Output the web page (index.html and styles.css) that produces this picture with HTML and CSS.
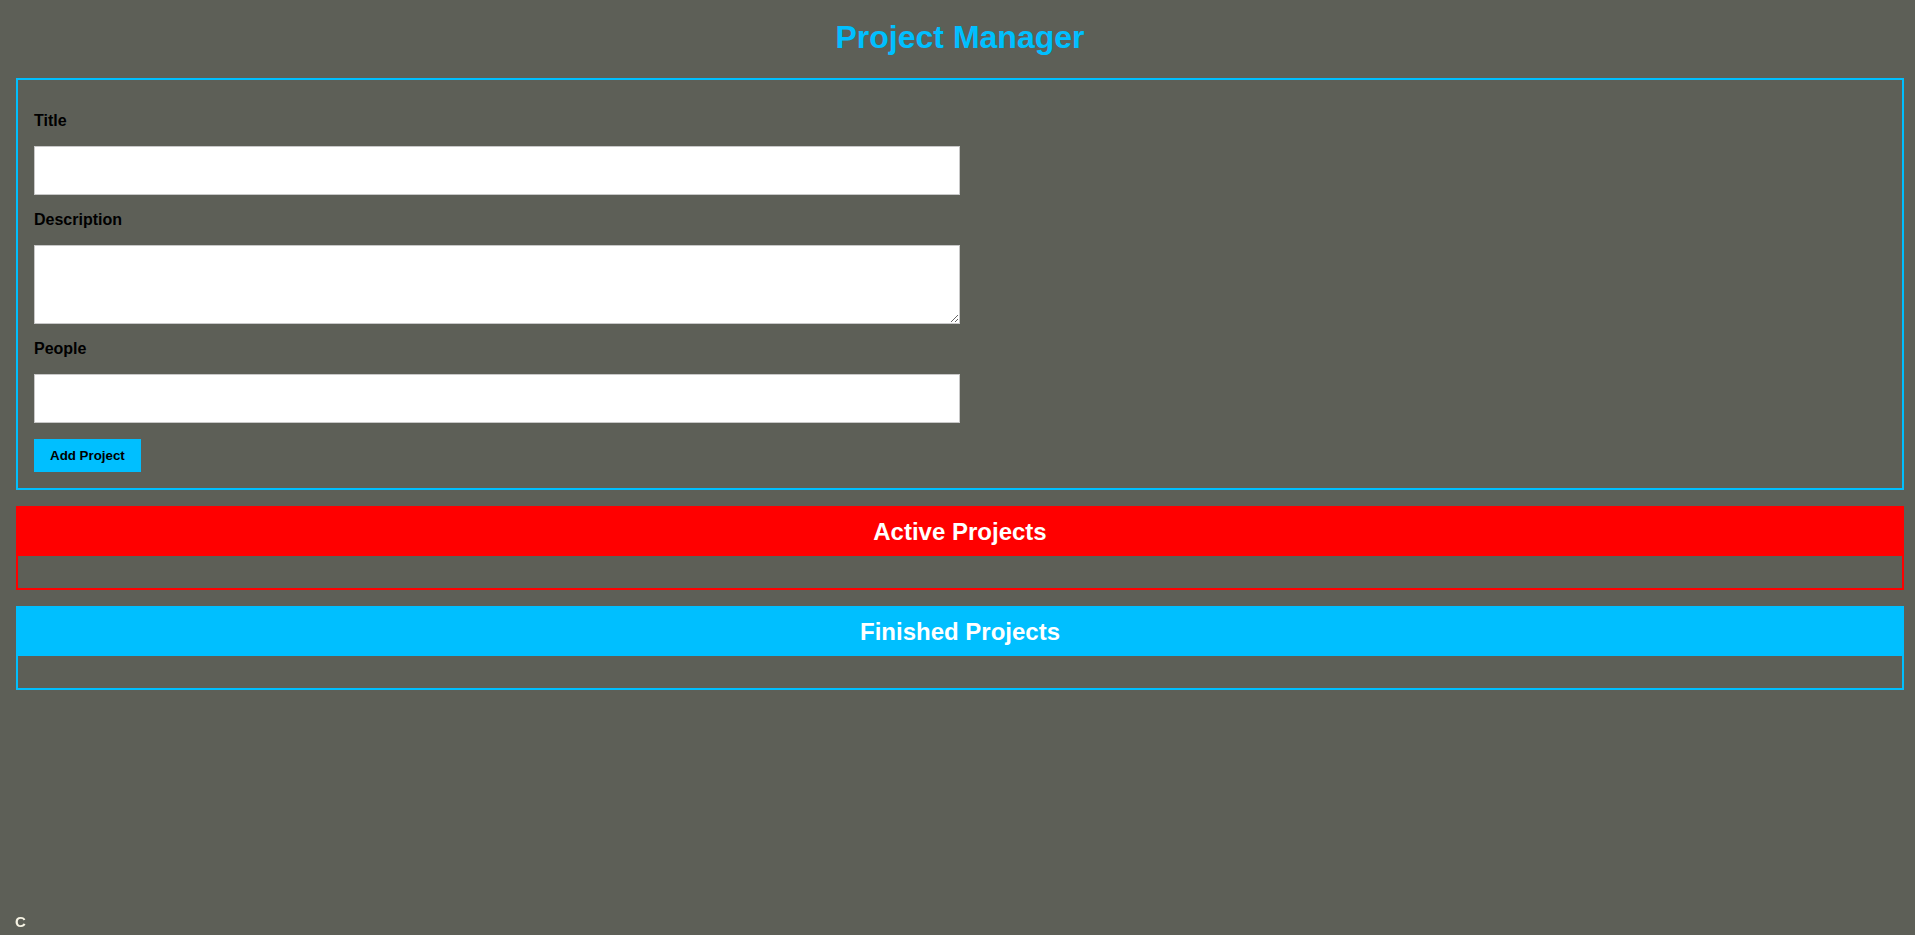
FILE: index.html
```html
<!DOCTYPE html>
<html lang="en">
<head>
<meta charset="UTF-8">
<title>Project Manager</title>
<link rel="stylesheet" href="styles.css">
</head>
<body>
<main class="app">
  <h1 class="app-title">Project Manager</h1>
  <form class="project-form">
    <label class="field-label" for="title">Title</label>
    <input class="field-input" id="title" type="text">
    <label class="field-label" for="description">Description</label>
    <textarea class="field-textarea" id="description"></textarea>
    <label class="field-label" for="people">People</label>
    <input class="field-input" id="people" type="number">
    <button class="add-btn" type="submit">Add Project</button>
  </form>
  <section class="projects projects-active">
    <header class="projects-header"><h2 class="projects-title">Active Projects</h2></header>
    <ul class="projects-list"></ul>
  </section>
  <section class="projects projects-finished">
    <header class="projects-header"><h2 class="projects-title">Finished Projects</h2></header>
    <ul class="projects-list"></ul>
  </section>
</main>
<div class="corner-mark">C</div>
</body>
</html>
```
FILE: styles.css
```css
* {
  box-sizing: border-box;
}

html, body {
  margin: 0;
  padding: 0;
  background: #5d5f57;
  font-family: "Liberation Sans", Arial, sans-serif;
  height: 100%;
}

.app {
  margin: 0 11px 0 16px;
  display: flex;
  flex-direction: column;
}

.app-title {
  margin: 19px 0 22px;
  font-size: 32px;
  line-height: 37px;
  font-weight: bold;
  color: #00bfff;
  text-align: center;
}

.project-form {
  border: 2px solid #00bfff;
  padding: 16px;
  display: flex;
  flex-direction: column;
  align-items: flex-start;
}

.field-label {
  display: block;
  margin: 16px 0;
  font-size: 16px;
  line-height: normal;
  font-weight: bold;
  color: #000;
}

.field-input,
.field-textarea {
  display: block;
  width: 50%;
  margin: 0;
  background: #fff;
  border: 1px solid #c8c8c8;
  font-family: "Liberation Sans", Arial, sans-serif;
  font-size: 16px;
}

.field-input {
  height: 49px;
}

.field-textarea {
  height: 79px;
  resize: vertical;
}

.add-btn {
  margin-top: 16px;
  height: 33px;
  padding: 0 16px;
  border: none;
  background: #00bfff;
  color: #000;
  font-family: "Liberation Sans", Arial, sans-serif;
  font-size: 13.33px;
  font-weight: bold;
  cursor: pointer;
}

.projects {
  margin-top: 16px;
  border: 2px solid;
}

.projects-active {
  border-color: #ff0000;
}

.projects-finished {
  border-color: #00bfff;
}

.projects-header {
  height: 48px;
}

.projects-active .projects-header {
  background: #ff0000;
}

.projects-finished .projects-header {
  background: #00bfff;
}

.projects-title {
  margin: 0;
  font-size: 24px;
  line-height: 48px;
  font-weight: bold;
  color: #fff;
  text-align: center;
}

.projects-list {
  margin: 0;
  padding: 16px 0;
  list-style: none;
}

.corner-mark {
  position: fixed;
  left: 15px;
  bottom: 6px;
  font-family: "Liberation Sans", Arial, sans-serif;
  font-weight: bold;
  font-size: 15px;
  line-height: 15px;
  color: #f6f3e4;
}
```
